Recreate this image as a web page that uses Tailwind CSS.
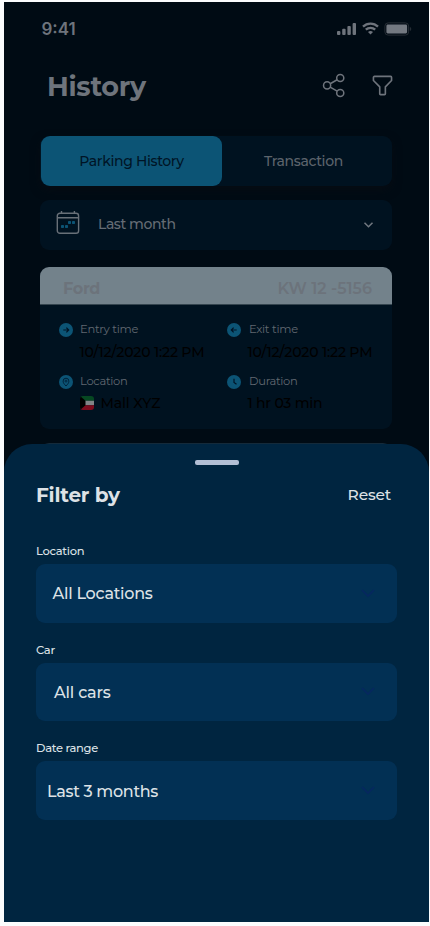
<!DOCTYPE html>
<html lang="en">
<head>
<meta charset="utf-8">
<meta name="viewport" content="width=device-width, initial-scale=1">
<title>Parking History</title>
<script src="https://cdn.jsdelivr.net/npm/@tailwindcss/browser@4"></script>
</head>
<body class="bg-[#fbfcfd] h-[926px] overflow-hidden pt-[2px] pl-[4px] font-['Montserrat','Inter',sans-serif]">
<div class="relative w-[425px] h-[920px] bg-[#000b14] overflow-hidden whitespace-nowrap">

  <!-- Status bar -->
  <header class="flex items-center justify-between h-[54px] pl-[37.500px] pr-[17px] text-[#6e747c]">
    <span class="font-['Inter',sans-serif] text-[17px] leading-[20px] font-semibold">9:41</span>
    <div class="flex items-center gap-[5px] pb-[1px]">
      <svg width="21" height="14" viewBox="0 0 21 14" fill="currentColor"><rect x="1" y="9" width="3.400" height="4" rx="1"/><rect x="6.200" y="6.800" width="3.400" height="6.200" rx="1"/><rect x="11.400" y="4" width="3.400" height="9" rx="1"/><rect x="16.600" y="1" width="3.400" height="12" rx="1"/></svg>
      <svg width="17" height="13" viewBox="0 0 17 13" fill="none" stroke="currentColor" stroke-width="2.300"><path d="M1 4.700a10.800 10.800 0 0 1 15 0M3.800 7.700a6.800 6.800 0 0 1 9.400 0"/><path d="M8.500 12.600 6 10.100a3.600 3.600 0 0 1 5 0z" fill="currentColor" stroke="none"/></svg>
      <svg width="28" height="14" viewBox="0 0 28 14"><rect x=".9" y=".9" width="23.700" height="12.200" rx="3.200" fill="none" stroke="#252d35"/><rect x="2.400" y="2.600" width="20.700" height="8.800" rx="1.300" fill="#737981"/><path d="M25.800 4.800c2 .8 2 3.600 0 4.400z" fill="#252d35"/></svg>
    </div>
  </header>

  <!-- Title row -->
  <div class="flex items-center h-[62px] pl-[43px] pr-[36px] text-[#6e747c]">
    <h1 class="grow text-[27px] leading-[32px] font-bold tracking-[-0.300px]">History</h1>
    <svg class="mr-[26.500px] mt-[-3px]" width="24" height="25" viewBox="0 0 25 26" fill="none" stroke="currentColor" stroke-width="1.600"><circle cx="5.300" cy="12.900" r="3.700"/><circle cx="19" cy="5.200" r="3.700"/><circle cx="19" cy="20.800" r="3.700"/><path d="m8.500 11.200 7.300-4.200M8.500 14.700l7.300 4.200"/></svg>
    <svg class="mt-[-3px]" width="21" height="21" viewBox="0 0 22 22" fill="none" stroke="currentColor" stroke-width="1.700" stroke-linejoin="round"><path d="M2.500 1.500h17a1 1 0 0 1 1 1V5.700l-6.500 6.800v7.200a.8.8 0 0 1-.8.8H8.900a.8.8 0 0 1-.8-.8v-7.200L1.500 5.700V2.500a1 1 0 0 1 1-1Z"/></svg>
  </div>

  <main class="flex flex-col mt-[18px] mx-[36px] w-[352px]">
    <!-- Tabs -->
    <div class="flex h-[50px] rounded-[9px] bg-[#001220] shadow-[0_4px_10px_#060c13] text-[14px] tracking-[-0.350px] font-medium text-center">
      <div class="w-[181px] ml-[1px] rounded-[9px] bg-[#0c5475] text-[#001426] leading-[51px]">Parking History</div>
      <div class="grow text-[#5d646c] leading-[51px] pr-[7px]">Transaction</div>
    </div>

    <!-- Period selector -->
    <div class="flex items-center mt-[14px] h-[50px] rounded-[9px] bg-[#001220] pl-[16px] pr-[18px]">
      <svg class="mt-[-4px]" width="24" height="24" viewBox="0 0 24 24" fill="none"><rect x="1.300" y="2.300" width="21.300" height="20" rx="2.600" stroke="#687078" stroke-width="1.400"/><path d="M1.500 6.800h21M5.500 0v2M18.400 0v2" stroke="#687078" stroke-width="1.400"/><g fill="#0c5475"><rect x="5" y="14" width="3" height="3" rx=".7"/><rect x="9" y="14" width="3" height="3" rx=".7"/><rect x="12" y="10" width="3" height="3" rx=".7"/><rect x="16" y="10" width="3" height="3" rx=".7"/></g></svg>
      <span class="grow pl-[18px] pb-[2px] text-[14px] leading-[20px] tracking-[-0.430px] font-medium text-[#656c74]">Last month</span>
      <svg width="11" height="8" viewBox="0 0 11 8" fill="none" stroke="#717880" stroke-width="1.500"><path d="m1.500 1.700 4 4 4-4"/></svg>
    </div>

    <!-- Parking record -->
    <article class="mt-[17px] h-[162px] rounded-[9px] overflow-hidden bg-[#001220]">
      <div class="flex items-center justify-between h-[38px] pt-[6px] pl-[23px] pr-[20px] bg-[#73828b] border-b border-[#35454f] text-[16px] font-semibold text-[#6c737b]">
        <span class="font-bold tracking-[-0.300px]">Ford</span><span>KW 12 -5156</span>
      </div>
      <div class="grid grid-cols-[168px_1fr] pl-[19px] pt-[15px] gap-y-[6px]">
        <section class="h-[46px]">
          <div class="flex items-center h-[20px] text-[11.500px] tracking-[-0.270px] text-[#606871]">
            <svg class="mr-[7px]" width="14" height="14" viewBox="0 0 14 14"><circle cx="7" cy="7" r="7" fill="#0c5475"/><path d="M4.300 7h5M7.400 4.600 9.700 7 7.400 9.400" fill="none" stroke="#001426" stroke-width="1.200"/></svg>Entry time
          </div>
          <div class="pl-[20.500px] pt-[2px] text-[14px] leading-[20px] tracking-[-0.170px] font-medium text-black">10/12/2020 1:22 PM</div>
        </section>
        <section class="h-[46px]">
          <div class="flex items-center h-[20px] text-[11.500px] tracking-[-0.270px] text-[#606871]">
            <svg class="mr-[8px]" width="14" height="14" viewBox="0 0 14 14"><circle cx="7" cy="7" r="7" fill="#0c5475"/><path d="M9.700 7h-5M6.600 4.600 4.300 7l2.300 2.400" fill="none" stroke="#001426" stroke-width="1.200"/></svg>Exit time
          </div>
          <div class="pl-[20.500px] pt-[2px] text-[14px] leading-[20px] tracking-[-0.170px] font-medium text-black">10/12/2020 1:22 PM</div>
        </section>
        <section>
          <div class="flex items-center h-[20px] text-[11.500px] tracking-[-0.300px] text-[#606871]">
            <svg class="mr-[7px]" width="14" height="14" viewBox="0 0 14 14"><circle cx="7" cy="7" r="7" fill="#0c5475"/><path d="M7 11C5.200 9.200 4.100 7.800 4.100 6.100a2.900 2.900 0 0 1 5.800 0C9.900 7.800 8.800 9.200 7 11Z" fill="none" stroke="#001c33" stroke-width=".9"/><circle cx="7" cy="6.100" r="1" fill="none" stroke="#001c33" stroke-width=".8"/></svg>Location
          </div>
          <div class="flex items-center pl-[20.500px] pt-[1px] text-[14px] leading-[20px] tracking-[-0.100px] font-medium text-black">
            <svg class="mr-[7px] rounded-[3px]" width="14" height="14" viewBox="0 0 14 14"><path fill="#064822" d="M0 0h14v4.700H0z"/><path fill="#828487" d="M0 4.700h14v4.600H0z"/><path fill="#7d0b1d" d="M0 9.300h14V14H0z"/><path d="m0 0 5.500 4.700v4.600L0 14z"/></svg>Mall XYZ
          </div>
        </section>
        <section>
          <div class="flex items-center h-[20px] text-[11.500px] tracking-[-0.300px] text-[#606871]">
            <svg class="mr-[8px]" width="14" height="14" viewBox="0 0 14 14"><circle cx="7" cy="7" r="7" fill="#0c5475"/><path d="M7 3.700V7.500l2.500 1.700" fill="none" stroke="#001426" stroke-width="1.200"/></svg>Duration
          </div>
          <div class="pl-[20.500px] pt-[1px] text-[14px] leading-[20px] tracking-[-0.220px] font-medium text-black">1 hr 03 min</div>
        </section>
      </div>
    </article>
    <div class="mt-[14px] h-[38px] rounded-t-[9px] bg-[#142a3a]"></div>
  </main>

  <!-- Filter sheet -->
  <div class="absolute inset-x-0 top-[442px] bottom-0 flex flex-col rounded-t-[28px] bg-[#002540] px-[32px] text-[#dde2e6]">
    <div class="mt-[15.500px] w-[44px] h-[5px] mb-[.5px] shrink-0 self-center rounded-[2px] bg-[#b3bfd5]"></div>
    <div class="flex items-center justify-between mt-[14px] h-[32px] pr-[6px]">
      <h2 class="text-[20px] leading-[32px] font-bold tracking-[-0.200px]">Filter by</h2>
      <button class="text-[15.500px] leading-[30px] pb-[1px] tracking-[-0.200px] font-medium">Reset</button>
    </div>
    <label class="mt-[30px] h-[20px] text-[11.500px] leading-[20px] tracking-[-0.300px] font-medium">Location</label>
    <div class="flex items-center justify-between mt-[3px] h-[58.500px] w-[361px] rounded-[9px] bg-[#023054] pl-[16.500px] pr-[22px] text-[16px] tracking-[-0.250px] font-medium"><span class="pt-[2px]">All Locations</span>
      <svg width="14" height="9" viewBox="0 0 14 9" fill="none" stroke="#06275f" stroke-width="1.700"><path d="m1 1 6 6 6-6"/></svg>
    </div>
    <label class="mt-[17.200px] h-[20px] text-[11.500px] leading-[20px] tracking-[-0.300px] font-medium">Car</label>
    <div class="flex items-center justify-between mt-[3px] h-[58.500px] w-[361px] rounded-[9px] bg-[#023054] pl-[18px] pr-[22px] text-[16px] tracking-[-0.200px] font-medium"><span class="pt-[2px]">All cars</span>
      <svg width="14" height="9" viewBox="0 0 14 9" fill="none" stroke="#06275f" stroke-width="1.700"><path d="m1 1 6 6 6-6"/></svg>
    </div>
    <label class="mt-[17.200px] h-[20px] text-[11.500px] leading-[20px] tracking-[-0.300px] font-medium">Date range</label>
    <div class="flex items-center justify-between mt-[3px] h-[58.500px] w-[361px] rounded-[9px] bg-[#023054] pl-[11px] pr-[22px] text-[16px] tracking-[-0.300px] font-medium"><span class="pt-[2px]">Last 3 months</span>
      <svg width="14" height="9" viewBox="0 0 14 9" fill="none" stroke="#06275f" stroke-width="1.700"><path d="m1 1 6 6 6-6"/></svg>
    </div>
  </div>
</div>
</body>
</html>
